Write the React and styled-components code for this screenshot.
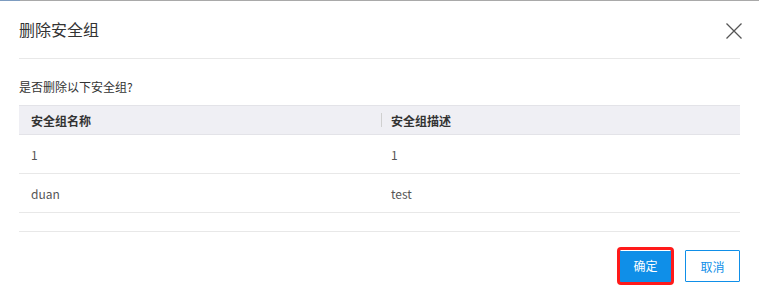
import React from "react";
import styled, { createGlobalStyle } from "styled-components";

const Global = createGlobalStyle`
  html, body { margin: 0; padding: 0; background: #fff; }
  body { font-family: "Noto Sans CJK SC", "Noto Sans", sans-serif; color: #555; }
`;

const Page = styled.div`
  width: 759px;
  height: 299px;
  background: #fff;
  display: flex;
  flex-direction: column;
`;

const TopEdge = styled.div`
  height: 1px;
  background: linear-gradient(to right, #7d9cc0 0, #7d9cc0 20px, #a9a9a9 20px, #a9a9a9 100%);
`;

const Dialog = styled.div`
  padding: 0 19px;
  display: flex;
  flex-direction: column;
`;

const Header = styled.div`
  height: 57px;
  border-bottom: 1px solid #e8e8e8;
  display: flex;
  align-items: center;
  justify-content: space-between;
`;

const Title = styled.div`
  font-size: 16px;
  line-height: 20px;
  color: #333;
  margin-top: -2px;
`;

const Close = styled.button`
  border: 0;
  background: none;
  padding: 0;
  width: 16px;
  height: 16px;
  margin-right: -2px;
  margin-top: 2px;
  display: flex;
  cursor: pointer;
`;

const Question = styled.div`
  margin-top: 19px;
  font-size: 12px;
  line-height: 18px;
  color: #333;
`;

const Table = styled.div`
  margin-top: 9px;
  display: flex;
  flex-direction: column;
`;

const Row = styled.div`
  display: grid;
  grid-template-columns: 360px 1fr;
  height: ${(p) => (p.$head ? "28px" : "38px")};
  background: ${(p) => (p.$head ? "#efeff4" : "#fff")};
  border-top: ${(p) => (p.$head ? "1px solid #e3e3e8" : "0")};
  border-bottom: 1px solid ${(p) => (p.$head ? "#e3e3e8" : "#e8e8e8")};
`;

const Cell = styled.div`
  display: flex;
  align-items: center;
  padding-left: ${(p) => (p.$sep ? "2px" : "12px")};
  font-size: 12px;
  color: ${(p) => (p.$head ? "#333" : "#555")};
  font-weight: ${(p) => (p.$head ? 700 : 400)};
`;

const Sep = styled.span`
  width: 1px;
  height: 14px;
  background: #d0d0d0;
  margin-right: 9px;
`;

const Filler = styled.div`
  height: 18px;
  border-bottom: 1px solid #e8e8e8;
`;

const Footer = styled.div`
  margin-top: 18px;
  display: flex;
  justify-content: flex-end;
  align-items: center;
  gap: 14px;
`;

const Button = styled.button`
  box-sizing: border-box;
  height: ${(p) => (p.$primary ? "32px" : "32px")};
  width: ${(p) => (p.$primary ? "51px" : "55px")};
  font-family: inherit;
  font-size: 12px;
  padding: 0;
  border-radius: 1px;
  cursor: pointer;
  background: ${(p) => (p.$primary ? "#0f8fe8" : "#fff")};
  color: ${(p) => (p.$primary ? "#fff" : "#0f8fe8")};
  border: 1px solid #0f8fe8;
  ${(p) =>
    p.$primary &&
    `outline: 3px solid #ff1a1a; outline-offset: 0; border-top: 1px solid #fff; margin-top: -1px;`}
`;

export default function App() {
  const rows = [
    ["1", "1"],
    ["duan", "test"],
  ];
  return (
    <>
      <Global />
      <Page>
        <TopEdge />
        <Dialog>
          <Header>
            <Title>删除安全组</Title>
            <Close aria-label="关闭">
              <svg width="16" height="16" viewBox="0 0 16 16">
                <path d="M0.5 0.5 L15.5 15.5 M15.5 0.5 L0.5 15.5" stroke="#555" strokeWidth="1.3" fill="none" />
              </svg>
            </Close>
          </Header>
          <Question>是否删除以下安全组?</Question>
          <Table>
            <Row $head>
              <Cell $head>安全组名称</Cell>
              <Cell $head $sep>
                <Sep />
                安全组描述
              </Cell>
            </Row>
            {rows.map(([a, b]) => (
              <Row key={a}>
                <Cell>{a}</Cell>
                <Cell>{b}</Cell>
              </Row>
            ))}
            <Filler />
          </Table>
          <Footer>
            <Button $primary>确定</Button>
            <Button>取消</Button>
          </Footer>
        </Dialog>
      </Page>
    </>
  );
}
